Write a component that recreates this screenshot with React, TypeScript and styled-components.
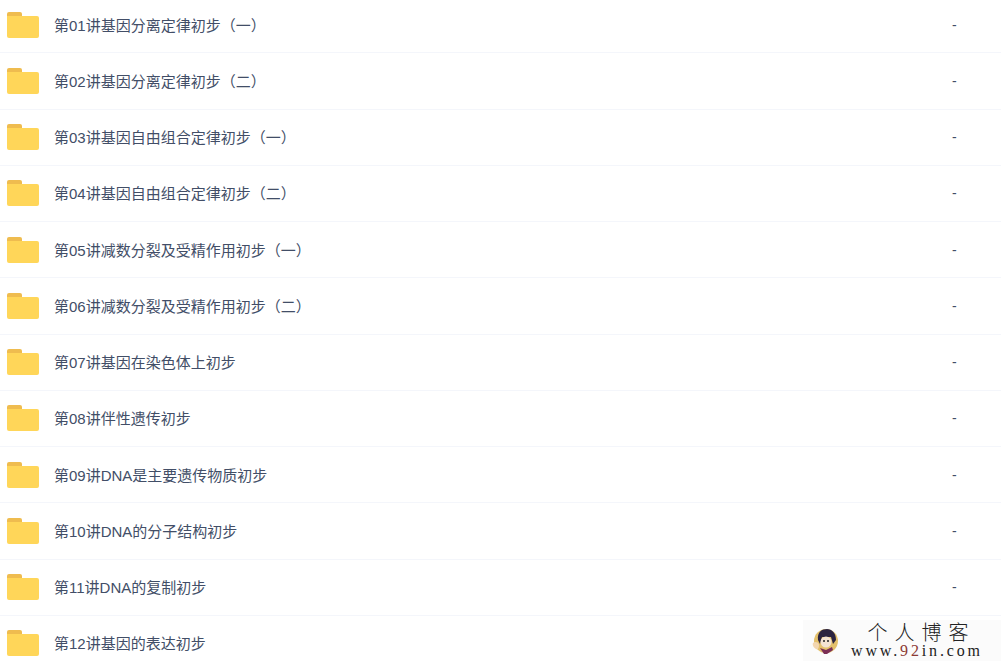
import styled, { createGlobalStyle } from 'styled-components';

const GlobalStyle = createGlobalStyle`
  html, body {
    margin: 0;
    padding: 0;
    height: 100%;
    overflow: hidden;
    background: #fff;
  }
`;

const Page = styled.div`
  position: relative;
  width: 1001px;
  height: 661px;
  overflow: hidden;
  font-family: 'Liberation Sans', 'Noto Sans CJK SC', sans-serif;
`;

const List = styled.ul`
  margin: -3px 0 0;
  padding: 0;
  list-style: none;
`;

const Row = styled.li`
  box-sizing: border-box;
  display: flex;
  align-items: center;
  height: 56.25px;
  padding-left: 7px;
  border-bottom: 1px solid #f4f6fb;
`;

const Name = styled.span`
  flex: 1;
  margin: -1px 0 0 15px;
  color: #424e67;
  font-size: 15px;
  white-space: nowrap;
`;

const Size = styled.span`
  width: 49px;
  color: #424e67;
  font-size: 14px;
`;

const Watermark = styled.div`
  position: absolute;
  right: 0;
  bottom: 0;
  display: flex;
  align-items: center;
  gap: 13px;
  box-sizing: border-box;
  width: 198px;
  height: 41px;
  padding: 0 0 0 9px;
  background: #fbfbfb;
`;

const WatermarkText = styled.div`
  display: flex;
  flex-direction: column;
  align-items: center;
  font-family: 'Liberation Serif', 'Noto Sans CJK SC', serif;
  color: #222;
`;

const Title = styled.span`
  margin: 0 -7px 0 5px;
  font-size: 20px;
  line-height: 20px;
  letter-spacing: 7px;
  font-weight: 300;
`;

const Domain = styled.span`
  margin-right: -3px;
  font-size: 16px;
  line-height: 15px;
  letter-spacing: 2.85px;
  white-space: nowrap;

  em {
    color: #8c3a34;
    font-style: normal;
  }
`;

const folders = [
  { name: '第01讲基因分离定律初步（一）', size: '-' },
  { name: '第02讲基因分离定律初步（二）', size: '-' },
  { name: '第03讲基因自由组合定律初步（一）', size: '-' },
  { name: '第04讲基因自由组合定律初步（二）', size: '-' },
  { name: '第05讲减数分裂及受精作用初步（一）', size: '-' },
  { name: '第06讲减数分裂及受精作用初步（二）', size: '-' },
  { name: '第07讲基因在染色体上初步', size: '-' },
  { name: '第08讲伴性遗传初步', size: '-' },
  { name: '第09讲DNA是主要遗传物质初步', size: '-' },
  { name: '第10讲DNA的分子结构初步', size: '-' },
  { name: '第11讲DNA的复制初步', size: '-' },
  // the watermark sits over this row's size column
  { name: '第12讲基因的表达初步', size: '' },
];

function FolderIcon() {
  return (
    <svg width="32" height="26" viewBox="0 0 32 26">
      <path d="M0 2a2 2 0 0 1 2-2h11a2 2 0 0 1 2 2v3H0z" fill="#efbc4f" />
      <path d="M0 4h30a2 2 0 0 1 2 2v18a2 2 0 0 1-2 2H2a2 2 0 0 1-2-2z" fill="#ffd659" />
    </svg>
  );
}

function Avatar() {
  return (
    <svg width="26" height="26" viewBox="0 0 26 26">
      <circle cx="14" cy="13" r="12" fill="#e3c06c" />
      <path d="M6 12C5 4 10 1 15 1s9 4 9 11l-3 4-2-7h-9l-2 7z" fill="#2c2440" />
      <circle cx="14" cy="14" r="5.5" fill="#f3e3d3" />
      <path d="M8 20l6 2 6-3 1 3-6 4h-3z" fill="#7b2f55" />
      <path d="M1 15c2-2 6-1 6 2s-1 5-3 4-4-4-3-6z" fill="#f2d6b0" />
      <circle cx="12" cy="13" r="1" fill="#222" />
      <circle cx="16" cy="13" r="1" fill="#222" />
    </svg>
  );
}

export default function App() {
  return (
    <Page>
      <GlobalStyle />
      <List>
        {folders.map(folder => (
          <Row key={folder.name}>
            <FolderIcon />
            <Name>{folder.name}</Name>
            <Size>{folder.size}</Size>
          </Row>
        ))}
      </List>
      <Watermark>
        <Avatar />
        <WatermarkText>
          <Title>个人博客</Title>
          <Domain>
            www.<em>92</em>in.com
          </Domain>
        </WatermarkText>
      </Watermark>
    </Page>
  );
}
